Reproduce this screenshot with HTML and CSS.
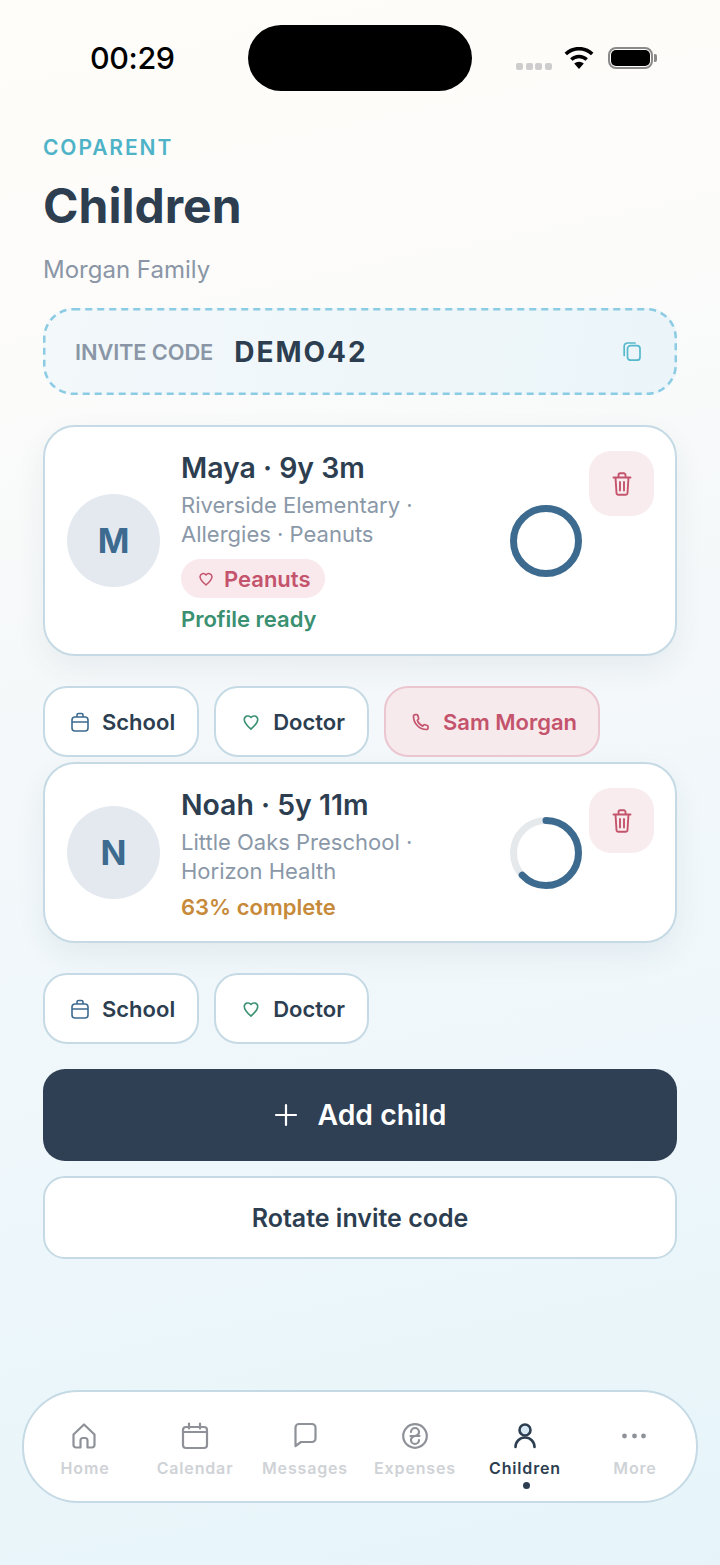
FILE: index.html

```html
<!DOCTYPE html>
<html lang="en">
<head>
  <meta name="viewport" content="width=device-width, initial-scale=1.0">
  <meta charset="UTF-8">
  <title>Children</title>
  <link rel="stylesheet" href="styles.css">
</head>
<body>
  <div class="screen">
    <div class="status-bar">
      <span class="clock">00:29</span>
      <span class="island"></span>
      <span class="status-icons">
        <span class="signal"><i></i><i></i><i></i><i></i></span>
        <svg class="wifi" width="30" height="22" viewBox="0 0 30 22">
          <path d="M15 22l-4.800-5.400a7 7 0 0 1 9.600 0z" fill="#000"/>
          <path d="M7.300 12.600a11.200 11.200 0 0 1 15.400 0" fill="none" stroke="#000" stroke-width="3.400"/>
          <path d="M1.800 7a19 19 0 0 1 26.400 0" fill="none" stroke="#000" stroke-width="3.600"/>
        </svg>
        <span class="battery"><span class="battery-fill"></span></span>
      </span>
    </div>

    <main class="content">
      <div class="eyebrow">COPARENT</div>
      <h1>Children</h1>
      <p class="family">Morgan Family</p>

      <div class="invite">
        <svg class="invite-dash" width="634" height="87" viewBox="0 0 634 87">
          <rect x="1.250" y="1.250" width="631.500" height="84.500" rx="29" fill="none" stroke="#8ccbe4" stroke-width="2.500" stroke-dasharray="7 5"/>
        </svg>
        <span class="invite-label">INVITE CODE</span>
        <span class="invite-code">DEMO42</span>
        <svg class="copy-icon" width="18" height="19" viewBox="0 0 18 19" fill="none" stroke="#55b8cc" stroke-width="1.700" stroke-linejoin="round" stroke-linecap="round">
          <rect x="4.500" y="3.700" width="12.500" height="14.500" rx="3"/>
          <path d="M1.200 13.500V4.300a3.300 3.300 0 0 1 3.300-3.300h7.500"/>
        </svg>
      </div>

      <section class="card card-maya">
        <div class="avatar">M</div>
        <div class="card-text">
          <h2>Maya · 9y 3m</h2>
          <p class="meta">Riverside Elementary ·<br>Allergies · Peanuts</p>
          <span class="allergy">
            <svg width="16" height="16" viewBox="0 0 24 24" fill="none" stroke="#c4536c" stroke-width="2.200" stroke-linejoin="round"><path d="M12 21C7 16.500 3 13 3 8.500A5 5 0 0 1 12 6a5 5 0 0 1 9 2.500C21 13 17 16.500 12 21z"/></svg>
            Peanuts
          </span>
          <div class="state state-ready">Profile ready</div>
        </div>
        <svg class="ring" width="72" height="72" viewBox="0 0 72 72">
          <circle cx="36" cy="36" r="32.500" fill="none" stroke="#3d6a8f" stroke-width="7"/>
        </svg>
        <button class="delete">
          <svg width="20" height="24" viewBox="0 0 20 24" fill="none" stroke="#c4536c" stroke-width="1.900" stroke-linecap="round" stroke-linejoin="round"><path d="M1.500 5.500h17M3.500 5.500l1 15.500a2 2 0 0 0 2 1.800h7a2 2 0 0 0 2-1.800l1-15.500M6.500 5.500V3a1.700 1.700 0 0 1 1.700-1.700h3.600A1.700 1.700 0 0 1 13.500 3v2.500M8 10v8.500M12 10v8.500"/></svg>
        </button>
      </section>

      <div class="chips">
        <span class="chip">
          <svg width="18" height="20" viewBox="0 0 18 20" fill="none" stroke="#3d6a8f" stroke-width="1.600" stroke-linejoin="round"><rect x="1" y="5" width="16" height="14" rx="3"/><path d="M6 5V3a1.500 1.500 0 0 1 1.500-1.500h3A1.500 1.500 0 0 1 12 3v2M1 10h16"/></svg>
          School
        </span>
        <span class="chip">
          <svg width="18" height="18" viewBox="0 0 24 24" fill="none" stroke="#3a9070" stroke-width="2.100" stroke-linejoin="round"><path d="M12 21.500C7 17 3 13.500 3 8.500A5 5 0 0 1 12 6a5 5 0 0 1 9 2.500c0 5-4 8.500-9 13z"/></svg>
          Doctor
        </span>
        <span class="chip chip-contact">
          <svg width="18" height="18" viewBox="0 0 18 18" fill="none" stroke="#c4536c" stroke-width="1.700" stroke-linejoin="round" stroke-linecap="round"><path d="M1.500 3.200c0 7 5.700 13.300 13 13.300a1.400 1.400 0 0 0 1.500-1.400v-1.600a1 1 0 0 0-.7-1l-2.600-.8a1 1 0 0 0-1 .3l-1 1.100A10 10 0 0 1 5.300 7.300l1-1a1 1 0 0 0 .3-1L5.800 2.500a1 1 0 0 0-1-.9H3a1.500 1.500 0 0 0-1.500 1.600z"/></svg>
          Sam Morgan
        </span>
      </div>

      <section class="card card-noah">
        <div class="avatar">N</div>
        <div class="card-text">
          <h2>Noah · 5y 11m</h2>
          <p class="meta">Little Oaks Preschool ·<br>Horizon Health</p>
          <div class="state state-partial">63% complete</div>
        </div>
        <svg class="ring" width="72" height="72" viewBox="0 0 72 72">
          <circle cx="36" cy="36" r="32.500" fill="none" stroke="#e5e9ec" stroke-width="7"/>
          <circle cx="36" cy="36" r="32.500" fill="none" stroke="#3d6a8f" stroke-width="7" stroke-linecap="round" stroke-dasharray="128.600 204.200" transform="rotate(-90 36 36)"/>
        </svg>
        <button class="delete">
          <svg width="20" height="24" viewBox="0 0 20 24" fill="none" stroke="#c4536c" stroke-width="1.900" stroke-linecap="round" stroke-linejoin="round"><path d="M1.500 5.500h17M3.500 5.500l1 15.500a2 2 0 0 0 2 1.800h7a2 2 0 0 0 2-1.800l1-15.500M6.500 5.500V3a1.700 1.700 0 0 1 1.700-1.700h3.600A1.700 1.700 0 0 1 13.500 3v2.500M8 10v8.500M12 10v8.500"/></svg>
        </button>
      </section>

      <div class="chips">
        <span class="chip">
          <svg width="18" height="20" viewBox="0 0 18 20" fill="none" stroke="#3d6a8f" stroke-width="1.600" stroke-linejoin="round"><rect x="1" y="5" width="16" height="14" rx="3"/><path d="M6 5V3a1.500 1.500 0 0 1 1.500-1.500h3A1.500 1.500 0 0 1 12 3v2M1 10h16"/></svg>
          School
        </span>
        <span class="chip">
          <svg width="18" height="18" viewBox="0 0 24 24" fill="none" stroke="#3a9070" stroke-width="2.100" stroke-linejoin="round"><path d="M12 21.500C7 17 3 13.500 3 8.500A5 5 0 0 1 12 6a5 5 0 0 1 9 2.500c0 5-4 8.500-9 13z"/></svg>
          Doctor
        </span>
      </div>

      <button class="btn-add">
        <svg width="24" height="24" viewBox="0 0 24 24" fill="none" stroke="#fff" stroke-width="2.200" stroke-linecap="round"><path d="M12 2v20M2 12h20"/></svg>
        Add child
      </button>
      <button class="btn-rotate">Rotate invite code</button>
    </main>

    <nav class="tabbar">
      <a class="tab">
        <svg width="28" height="28" viewBox="0 0 28 28" fill="none" stroke="#8e9298" stroke-width="2.200" stroke-linejoin="round" stroke-linecap="round"><path d="M2.500 12.500L13 2.500l10.500 10V23a2.500 2.500 0 0 1-2.500 2.500h-4.500V18.500a2.500 2.500 0 0 0-2.500-2.500h-2a2.500 2.500 0 0 0-2.500 2.500v7H5A2.500 2.500 0 0 1 2.500 23z"/></svg>
        <span>Home</span>
      </a>
      <a class="tab">
        <svg width="28" height="28" viewBox="0 0 28 28" fill="none" stroke="#8e9298" stroke-width="2.200" stroke-linejoin="round" stroke-linecap="round"><rect x="2" y="5" width="24" height="21" rx="3"/><path d="M2 10h24M8 1.500v5M19 1.500v5"/></svg>
        <span>Calendar</span>
      </a>
      <a class="tab">
        <svg width="28" height="28" viewBox="0 0 28 28" fill="none" stroke="#8e9298" stroke-width="2.200" stroke-linejoin="round" stroke-linecap="round"><path d="M4.500 5.500a3.500 3.500 0 0 1 3.500-3.500h13a3.500 3.500 0 0 1 3.500 3.500v11a3.500 3.500 0 0 1-3.500 3.500H10l-5.500 4z"/></svg>
        <span>Messages</span>
      </a>
      <a class="tab">
        <svg width="28" height="28" viewBox="0 0 28 28" fill="none" stroke="#8e9298" stroke-width="2.200" stroke-linecap="round"><circle cx="14" cy="14" r="11.800"/><path stroke-width="2.200" d="M10 10a4 4 0 0 1 8 0c0 3-4 4-4 4s-4 1-4 4a4 4 0 0 0 8 0M9.500 14h9"/></svg>
        <span>Expenses</span>
      </a>
      <a class="tab tab-active">
        <svg width="28" height="28" viewBox="0 0 28 28" fill="none" stroke="#2c3e50" stroke-width="2.600" stroke-linecap="round"><circle cx="14" cy="8" r="5.500" fill="#d5e8f4"/><path d="M4.500 25a9.500 9.500 0 0 1 19 0"/></svg>
        <span>Children</span>
        <i class="tab-dot"></i>
      </a>
      <a class="tab">
        <svg width="28" height="28" viewBox="0 0 28 28" fill="#8e9298"><circle cx="3.500" cy="14" r="2.400"/><circle cx="13.500" cy="14" r="2.400"/><circle cx="22.500" cy="14" r="2.400"/></svg>
        <span>More</span>
      </a>
    </nav>
  </div>
</body>
</html>
```

FILE: styles.css

```css
* {
  box-sizing: border-box;
}
html, body {
  margin: 0;
  padding: 0;
}
body {
  font-family: Inter, "Noto Sans", sans-serif;
  color: #2c3e50;
}
.screen {
  width: 720px;
  height: 1565px;
  overflow: hidden;
  display: flex;
  flex-direction: column;
  background: linear-gradient(168deg, #fffdf9 0%, #fdfcfa 16%, #f4f8fa 45%, #eef7fb 70%, #e6f4f9 100%);
}

/* Status bar */
.status-bar {
  height: 91px;
  margin-top: 25px;
  flex: none;
  display: flex;
  align-items: flex-start;
}
.clock {
  width: 248px;
  padding-left: 90px;
  font-size: 30.500px;
  font-weight: 500;
  line-height: 66px;
  color: #000;
  letter-spacing: -0.4px;
}
.island {
  width: 224px;
  height: 66px;
  border-radius: 33px;
  background: #000;
}
.status-icons {
  display: flex;
  align-items: center;
  height: 66px;
  padding-left: 44px;
}
.signal {
  display: flex;
  gap: 2.670px;
  margin-top: 17px;
}
.signal i {
  width: 7px;
  height: 7px;
  border-radius: 2px;
  background: #cdcdcd;
}
.wifi {
  margin-left: 12px;
}
.battery {
  width: 45px;
  height: 22px;
  margin-left: 14px;
  padding: 1px;
  border: 2px solid #8a8a8a;
  border-radius: 8px;
  position: relative;
}
.battery:after {
  content: "";
  position: absolute;
  right: -6px;
  top: 5px;
  width: 3px;
  height: 8px;
  border-radius: 0 2px 2px 0;
  background: #8a8a8a;
}
.battery-fill {
  display: block;
  height: 100%;
  border-radius: 5px;
  background: #000;
}

/* Page */
.content {
  padding: 20px 43px 0;
}
.eyebrow {
  font-size: 21px;
  line-height: 24px;
  font-weight: 600;
  letter-spacing: 1.900px;
  color: #4fb3c8;
}
h1 {
  margin: 18px 0 0;
  font-size: 48px;
  line-height: 56px;
  font-weight: 700;
}
.family {
  margin: 21px 0 0;
  font-size: 24px;
  line-height: 30px;
  color: #8a96a6;
}
.invite {
  margin-top: 23px;
  height: 87px;
  display: flex;
  align-items: center;
  padding: 0 36px 0 32px;
  border-radius: 29px;
  background: linear-gradient(100deg, #f3f8fa, #ebf5f9);
  position: relative;
}
.invite-dash {
  position: absolute;
  left: 0;
  top: 0;
}
.invite-label {
  font-size: 21.800px;
  font-weight: 600;
  letter-spacing: -0.1px;
  color: #8a96a6;
}
.invite-code {
  margin-left: 21px;
  font-size: 28px;
  font-weight: 700;
  letter-spacing: 2px;
}
.copy-icon {
  margin-left: auto;
}

/* Child cards */
.card {
  display: flex;
  align-items: center;
  padding: 24px 21px 24px 22px;
  border: 2px solid #c5dae4;
  border-radius: 32px;
  background: #fff;
  box-shadow: 0 12px 30px rgba(47, 64, 82, 0.07);
}
.card-maya {
  margin-top: 30px;
  height: 231px;
}
.card-noah {
  margin-top: 5px;
  height: 181px;
}
.avatar {
  width: 93px;
  height: 93px;
  flex: none;
  display: flex;
  align-items: center;
  justify-content: center;
  border-radius: 50%;
  background: #e3e9ef;
  color: #3d6a8f;
  font-size: 34px;
  font-weight: 700;
}
.card-text {
  flex: 1;
  margin: 2px 0 0 21px;
}
h2 {
  margin: 0;
  font-size: 28.400px;
  line-height: 36px;
  font-weight: 600;
}
.meta {
  margin: 5px 0 0;
  font-size: 22px;
  line-height: 29px;
  color: #8a98a8;
}
.allergy {
  display: inline-flex;
  align-items: center;
  gap: 10px;
  height: 39px;
  margin-top: 10px;
  padding: 0 14px 0 17px;
  border-radius: 20px;
  background: #f9e9ec;
  color: #c4536c;
  font-size: 22px;
  font-weight: 600;
}
.state {
  font-size: 22px;
  line-height: 28px;
  font-weight: 600;
}
.state-ready {
  margin-top: 7px;
  color: #3a9070;
}
.state-partial {
  margin-top: 7px;
  color: #c68a3a;
}
.ring {
  flex: none;
}
.delete {
  width: 65px;
  height: 65px;
  flex: none;
  align-self: flex-start;
  margin-left: 7px;
  padding: 0;
  display: flex;
  align-items: center;
  justify-content: center;
  border: none;
  border-radius: 22px;
  background: #f9ecee;
}

/* Chips */
.chips {
  display: flex;
  gap: 15px;
  margin-top: 30px;
}
.chip {
  display: flex;
  align-items: center;
  gap: 13px;
  height: 71px;
  padding: 0 22px 0 26px;
  border: 2px solid #c5dae4;
  border-radius: 24px;
  background: #fff;
  font-size: 22px;
  font-weight: 600;
}
.chip-contact {
  padding-right: 21px;
  border-color: #ebc5cf;
  background: #f7eaed;
  color: #c4536c;
}

/* Buttons */
.btn-add {
  width: 100%;
  height: 92px;
  margin-top: 25px;
  display: flex;
  align-items: center;
  justify-content: center;
  gap: 20px;
  border: none;
  border-radius: 22px;
  background: #2f4054;
  color: #fff;
  font-family: inherit;
  font-size: 28.300px;
  font-weight: 600;
}
.btn-rotate {
  width: 100%;
  height: 83px;
  margin-top: 15px;
  border: 2px solid #c5dae4;
  border-radius: 22px;
  background: #fff;
  color: #2c3e50;
  font-family: inherit;
  font-size: 25px;
  font-weight: 600;
}

/* Tab bar */
.tabbar {
  width: 676px;
  height: 113px;
  margin: auto 0 62px 22px;
  padding: 0 6px;
  display: flex;
  border: 2px solid #c5dae4;
  border-radius: 56px;
  background: #fff;
}
.tab {
  flex: 1;
  display: flex;
  flex-direction: column;
  align-items: center;
  padding-top: 30px;
  font-size: 16px;
  font-weight: 600;
  letter-spacing: 0.85px;
  color: #cfd2d6;
}
.tab span {
  margin-top: 7px;
  line-height: 22px;
}
.tab-active {
  color: #2c3e50;
}
.tab-dot {
  width: 7px;
  height: 7px;
  margin: 3px 0 0 3px;
  border-radius: 50%;
  background: #2c3e50;
}
```
